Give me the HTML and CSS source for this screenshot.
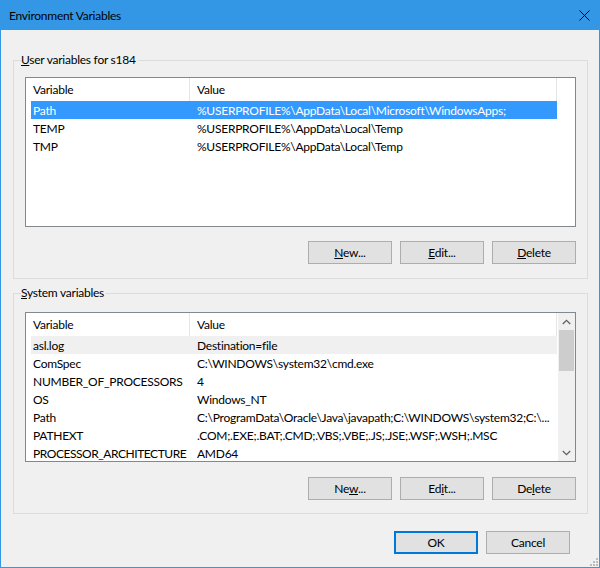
FILE: index.html
```html
<!DOCTYPE html>
<html lang="en">
<head>
    <meta charset="UTF-8">
    <title>Environment Variables</title>
    <link rel="stylesheet" href="styles.css">
</head>
<body>
    <div class="window">
        <div class="titlebar">
            <span class="title">Environment Variables</span>
            <svg class="close" width="11" height="11" viewBox="0 0 11 11">
                <path d="M0.5 0.5 L10.5 10.5 M10.5 0.5 L0.5 10.5" stroke="#000" stroke-width="1" fill="none"/>
            </svg>
        </div>

        <div class="client">
            <fieldset class="group user-group">
                <legend><u>U</u>ser variables for s184</legend>
                <div class="list">
                    <div class="list-body no-scroll">
                        <div class="row head"><span class="c1">Variable</span><span class="c2">Value</span></div>
                        <div class="row sel"><span class="c1">Path</span><span class="c2">%USERPROFILE%\AppData\Local\Microsoft\WindowsApps;</span></div>
                        <div class="row"><span class="c1">TEMP</span><span class="c2">%USERPROFILE%\AppData\Local\Temp</span></div>
                        <div class="row"><span class="c1">TMP</span><span class="c2">%USERPROFILE%\AppData\Local\Temp</span></div>
                    </div>
                </div>
                <div class="buttons">
                    <button><u>N</u>ew...</button>
                    <button><u>E</u>dit...</button>
                    <button><u>D</u>elete</button>
                </div>
            </fieldset>

            <fieldset class="group system-group">
                <legend><u>S</u>ystem variables</legend>
                <div class="list">
                    <div class="list-body">
                        <div class="row head"><span class="c1">Variable</span><span class="c2">Value</span></div>
                        <div class="row cur"><span class="c1">asl.log</span><span class="c2">Destination=file</span></div>
                        <div class="row"><span class="c1">ComSpec</span><span class="c2">C:\WINDOWS\system32\cmd.exe</span></div>
                        <div class="row"><span class="c1">NUMBER_OF_PROCESSORS</span><span class="c2">4</span></div>
                        <div class="row"><span class="c1">OS</span><span class="c2">Windows_NT</span></div>
                        <div class="row"><span class="c1">Path</span><span class="c2">C:\ProgramData\Oracle\Java\javapath;C:\WINDOWS\system32;C:\...</span></div>
                        <div class="row"><span class="c1">PATHEXT</span><span class="c2">.COM;.EXE;.BAT;.CMD;.VBS;.VBE;.JS;.JSE;.WSF;.WSH;.MSC</span></div>
                        <div class="row"><span class="c1 tight">PROCESSOR_ARCHITECTURE</span><span class="c2">AMD64</span></div>
                    </div>
                    <div class="scroll">
                        <div class="arrow">
                            <svg width="9" height="6" viewBox="0 0 9 6"><path d="M0.8 5 L4.5 1.3 L8.2 5" stroke="#606060" stroke-width="1.3" fill="none"/></svg>
                        </div>
                        <div class="track"><div class="thumb"></div></div>
                        <div class="arrow">
                            <svg width="9" height="6" viewBox="0 0 9 6"><path d="M0.8 1 L4.5 4.7 L8.2 1" stroke="#606060" stroke-width="1.3" fill="none"/></svg>
                        </div>
                    </div>
                </div>
                <div class="buttons">
                    <button>Ne<u>w</u>...</button>
                    <button>Ed<u>i</u>t...</button>
                    <button>De<u>l</u>ete</button>
                </div>
            </fieldset>

            <div class="dialog-buttons">
                <button class="default">OK</button>
                <button>Cancel</button>
            </div>
        </div>

        <svg class="grip" width="9" height="9" viewBox="0 0 9 9">
            <rect x="7" y="1" width="2" height="2" fill="#bcbcbc"/>
            <rect x="4" y="4" width="2" height="2" fill="#bcbcbc"/>
            <rect x="7" y="4" width="2" height="2" fill="#bcbcbc"/>
            <rect x="1" y="7" width="2" height="2" fill="#bcbcbc"/>
            <rect x="4" y="7" width="2" height="2" fill="#bcbcbc"/>
            <rect x="7" y="7" width="2" height="2" fill="#bcbcbc"/>
        </svg>
    </div>
</body>
</html>
```

FILE: styles.css
```css
body {
    margin: 0;
    font-family: "Segoe UI", Lato, "Noto Sans", sans-serif;
    font-size: 12px;
    letter-spacing: -0.25px;
    color: #000;
}
.window {
    position: relative;
    width: 600px;
    height: 568px;
    box-sizing: border-box;
    border: 1px solid #3497e6;
    border-top: 0;
    background: #f0f0f0;
}
.titlebar {
    height: 30px;
    background: #3497e6;
    display: flex;
    align-items: center;
    padding-left: 8px;
}
.close {
    margin-left: auto;
    margin-right: 9px;
}
.client {
    padding: 22px 11px 0 12px;
}
.group {
    margin: 0;
    border: 1px solid #dcdcdc;
    padding: 9px 11px 13px;
    min-width: 0;
}
.group legend {
    padding: 0 2px 0 0;
    margin-left: -4px;
    line-height: 16px;
}
.user-group .buttons {
    margin-top: 14px;
}
.user-group {
    padding-bottom: 14px;
}
.system-group {
    margin-top: 6px;
    padding-top: 11px;
}
.list {
    height: 150px;
    box-sizing: border-box;
    border: 1px solid #828790;
    background: #fff;
    display: flex;
}
.list-body {
    flex: 1;
    min-width: 0;
    padding-left: 5px;
    padding-right: 1px;
    overflow: hidden;
}
.list-body.no-scroll {
    padding-right: 18px;
}
.row {
    display: grid;
    grid-template-columns: 158px 1fr;
    height: 18px;
    line-height: 20px;
    white-space: nowrap;
}
.row span {
    overflow: hidden;
}
.row .c1 {
    padding-left: 2px;
}
.row .c1.tight {
    letter-spacing: -0.45px;
}
.row .c2 {
    padding-left: 8px;
}
.row.head {
    height: 23px;
    line-height: 23px;
}
.row.head .c2 {
    padding-left: 7px;
    border-left: 1px solid #e5e5e5;
    border-right: 1px solid #e5e5e5;
}
.row.sel {
    background: #3399ff;
    color: #fff;
}
.row.cur {
    background: #f0f0f0;
}
.scroll {
    width: 17px;
    background: #f0f0f0;
    display: flex;
    flex-direction: column;
}
.arrow {
    height: 17px;
    display: flex;
    align-items: center;
    justify-content: center;
}
.track {
    flex: 1;
    padding: 0 1px;
}
.thumb {
    height: 41px;
    background: #cdcdcd;
}
.buttons {
    display: flex;
    justify-content: flex-end;
    gap: 8px;
    margin-top: 15px;
}
button {
    box-sizing: border-box;
    width: 84px;
    height: 23px;
    padding: 0;
    background: #e1e1e1;
    border: 1px solid #adadad;
    font: inherit;
    letter-spacing: inherit;
    color: #000;
}
button.default {
    border: 2px solid #0078d7;
}
.dialog-buttons {
    display: flex;
    justify-content: flex-end;
    gap: 8px;
    margin-top: 17px;
    padding-right: 18px;
}
.grip {
    position: absolute;
    right: 1px;
    bottom: 1px;
}
```
